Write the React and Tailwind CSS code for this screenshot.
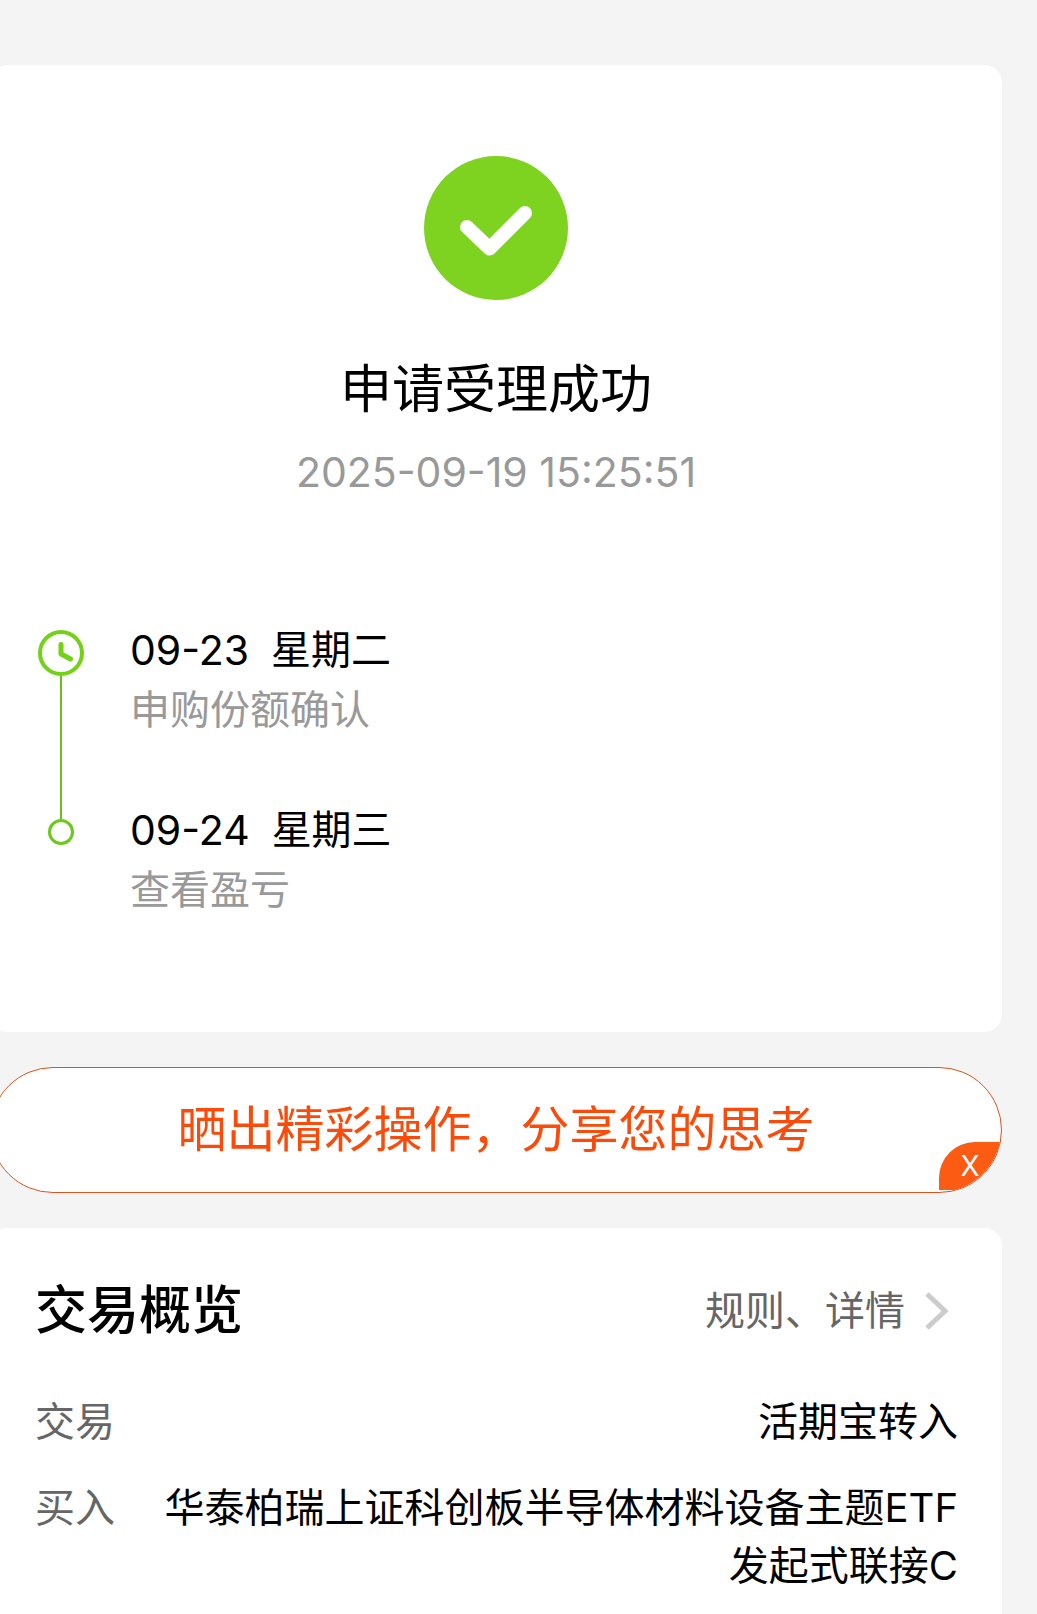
const steps = [
  { date: "09-23", day: "星期二", note: "申购份额确认" },
  { date: "09-24", day: "星期三", note: "查看盈亏" },
];

const rows = [
  { label: "交易", value: "活期宝转入" },
  { label: "买入", value: "华泰柏瑞上证科创板半导体材料设备主题ETF发起式联接C" },
];

function SuccessIcon() {
  return (
    <svg className="size-36" viewBox="0 0 144 144" fill="none" aria-hidden="true">
      <circle cx="72" cy="72" r="72" fill="#7ED321" />
      <path d="M43 71 65.500 92.500 101 57" stroke="#fff" strokeWidth="14" strokeLinecap="round" strokeLinejoin="round" />
    </svg>
  );
}

function ClockIcon() {
  return (
    <svg className="size-[46px] shrink-0" viewBox="0 0 46 46" fill="none" stroke="#73D216" strokeLinecap="round" strokeLinejoin="round" aria-hidden="true">
      <circle cx="23" cy="23" r="21" strokeWidth="4" />
      <path d="M23 14.500v9.500l9.500 5" strokeWidth="5" />
    </svg>
  );
}

export default function App() {
  return (
    <main className="flex min-h-screen flex-col gap-[35px] overflow-hidden bg-[#f4f4f4] pt-[65px] pr-[35px] font-['Inter','Noto_Sans_CJK_SC',sans-serif] text-[40px] leading-[60px] text-black">
      <section className="-ml-[10px] rounded-[18px] bg-white pt-[91px] pb-[112px]">
        <div className="flex flex-col items-center">
          <SuccessIcon />
          <h1 className="mt-[52px] text-[52px] leading-[76px]">申请受理成功</h1>
          <time className="mt-[14px] text-[41px] text-[#999]">2025-09-19 15:25:51</time>
        </div>

        <ol className="mt-[118px] pl-12">
          {steps.map((step, i) => (
            <li key={step.date} className="flex gap-[46px]">
              <div className="flex w-[46px] flex-col items-center">
                {i === 0 ? (
                  <>
                    <span className="h-[10px] shrink-0" />
                    <ClockIcon />
                    <span className="w-[2px] grow bg-[#67C01C]" />
                  </>
                ) : (
                  <>
                    <span className="h-[19px] w-[2px] bg-[#67C01C]" />
                    <span className="size-[26px] shrink-0 rounded-full border-3 border-[#6CC81C]" />
                  </>
                )}
              </div>
              <div className={i === 0 ? "pb-[60px]" : ""}>
                <p className="flex gap-[22px]">
                  <span className="text-[41px]">{step.date}</span>
                  <span>{step.day}</span>
                </p>
                <p className="text-[#999]">{step.note}</p>
              </div>
            </li>
          ))}
        </ol>
      </section>

      <section className="relative -ml-[10px] overflow-hidden rounded-full border border-[#D9541E] bg-white">
        <button type="button" className="block w-full py-6 text-center text-[49px] leading-[76px] text-[#FA4B0A]">
          晒出精彩操作，分享您的思考
        </button>
        <button type="button" aria-label="关闭" className="absolute right-0 bottom-[2px] h-12 w-[62px] rounded-tl-[36px] bg-[#FC5B14] text-[28px] leading-[48px] text-white">
          X
        </button>
      </section>

      <section className="-ml-[10px] grow rounded-t-[18px] bg-white pt-[45px] pr-11 pb-5 pl-[45px]">
        <header className="flex items-center justify-between">
          <h2 className="text-[52px] leading-[76px] font-medium">交易概览</h2>
          <a href="#details" className="mr-[9px] flex items-center gap-5 text-[#666]">
            规则、详情
            <svg className="h-10 w-6" viewBox="0 0 24 40" fill="none" stroke="#CCC" strokeWidth="5" aria-hidden="true">
              <path d="M2 3 20 20 2 37" />
            </svg>
          </a>
        </header>
        <dl className="mt-11 flex flex-col gap-7 leading-[58px]">
          {rows.map((row) => (
            <div key={row.label} className="flex justify-between gap-10">
              <dt className="shrink-0 text-[#666]">{row.label}</dt>
              <dd className="text-right">{row.value}</dd>
            </div>
          ))}
        </dl>
      </section>
    </main>
  );
}
